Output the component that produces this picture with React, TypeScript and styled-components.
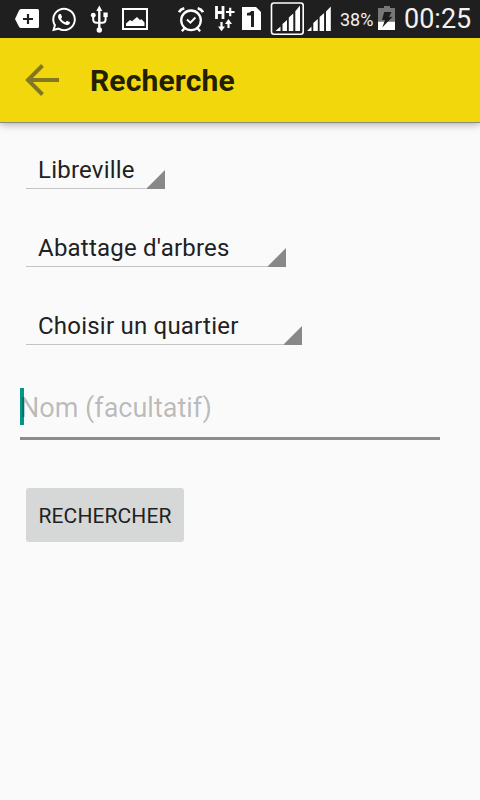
import React from "react";
import styled, { createGlobalStyle } from "styled-components";
import { FaWhatsapp } from "react-icons/fa";

const GlobalStyle = createGlobalStyle`
  *, *::before, *::after { box-sizing: border-box; }
  html, body { margin: 0; padding: 0; background: #fafafa; }
  body { font-family: Roboto, "Liberation Sans", sans-serif; color: #212121; }
`;

const Screen = styled.div`
  width: 480px;
  height: 800px;
  overflow: hidden;
  display: flex;
  flex-direction: column;
  background: #fafafa;
`;

const StatusBar = styled.header`
  height: 38px;
  flex: none;
  display: flex;
  align-items: center;
  padding-left: 15px;
  position: relative;
  z-index: 1;
  background: #1f1f1f;
  color: #fff;
`;

const StatusIcon = styled.svg<{ $gap?: number }>`
  display: block;
  flex: none;
  margin-left: ${(p) => p.$gap ?? 0}px;
`;

const WhatsappSlot = styled.span`
  display: flex;
  flex: none;
  justify-content: center;
  width: 24px;
  margin: 1px 0 0 12px;
`;

const StatusText = styled.span<{ $size: number; $width: number; $gap: number; $drop?: number }>`
  flex: none;
  width: ${(p) => p.$width}px;
  margin-left: ${(p) => p.$gap}px;
  padding-top: ${(p) => p.$drop ?? 0}px;
  font-size: ${(p) => p.$size}px;
  line-height: 36px;
  white-space: nowrap;
  color: #f2f2f2;
`;

const AppBar = styled.div`
  height: 85px;
  flex: none;
  display: flex;
  align-items: center;
  padding-left: 25px;
  background: #f2d70c;
  border-bottom: 1px solid #8b8a78;
  box-shadow: 0 1px 8px rgba(0, 0, 0, 0.35);
`;

const BackButton = styled.button`
  display: flex;
  padding: 0;
  border: 0;
  background: none;
`;

const Title = styled.h1`
  margin: 1px 0 0 31px;
  font-size: 30px;
  line-height: 41px;
  font-weight: 700;
  letter-spacing: 0.15px;
  color: #221f02;
`;

const Form = styled.main`
  display: flex;
  flex-direction: column;
  align-items: flex-start;
  padding: 27px 0 0 26px;
`;

const Spinner = styled.div<{ $width: number }>`
  width: ${(p) => p.$width}px;
  height: 39px;
  margin-bottom: 39px;
  padding-left: 12px;
  display: flex;
  justify-content: space-between;
  align-items: flex-end;
  border-bottom: 1px solid #c4c4c4;
  font-size: 24px;
  line-height: 36px;
  letter-spacing: 0.22px;
  white-space: nowrap;
`;

const Corner = styled.svg`
  display: block;
  flex: none;
  margin-bottom: -1px;
`;

const NameField = styled.div`
  width: 420px;
  height: 54px;
  margin: 2px 0 0 -6px;
  display: flex;
  align-items: flex-start;
  border-bottom: 3px solid #8c8c8c;
`;

const Caret = styled.span`
  width: 4px;
  height: 37px;
  margin: 2px -4px 0 0;
  flex: none;
  background: #009788;
`;

const Placeholder = styled.span`
  position: relative;
  font-size: 27px;
  line-height: 44px;
  color: rgba(0, 0, 0, 0.27);
`;

const SearchButton = styled.button`
  width: 158px;
  height: 54px;
  margin-top: 48px;
  padding: 2px 0 0;
  border: 0;
  border-radius: 3px;
  background: #d6d8d7;
  color: #212121;
  font: 400 21px/52px Roboto, sans-serif;
  letter-spacing: 0.1px;
  white-space: nowrap;
`;

const TagIcon = () => (
  <StatusIcon width="25" height="38" viewBox="15 0 25 38">
    <path d="M21 9h16.500q1.500 0 1.500 1.500v16q0 1.500-1.500 1.500H21q-1.200 0-2-1.200L15 19l4-8.500Q19.800 9 21 9Z" fill="#fff" />
    <path d="M28 14v10M23 19h10" stroke="#1f1f1f" strokeWidth="2.200" />
  </StatusIcon>
);

const UsbIcon = () => (
  <StatusIcon $gap={14} width="18" height="38" viewBox="90 0 18 38" fill="none" stroke="#fff">
    <path d="M99.300 10v20" strokeWidth="2.400" />
    <path d="M93.200 16v3.500q0 3.200 3.500 3.200h5.600q3.300 0 3.300-3.200V16" strokeWidth="2" />
    <path d="m99.300 5.500 3 5.500h-6Z" fill="#fff" stroke="none" />
    <circle cx="93.300" cy="15.200" r="2.400" fill="#fff" stroke="none" />
    <path d="M103.400 12.500h4.300v4.600h-4.300Z" fill="#fff" stroke="none" />
    <circle cx="99.300" cy="30" r="2.700" fill="#fff" stroke="none" />
  </StatusIcon>
);

const PictureIcon = () => (
  <StatusIcon $gap={14} width="26" height="38" viewBox="122 0 26 38">
    <path d="M123 9h24v20h-24Z" fill="none" stroke="#fff" strokeWidth="2" />
    <path d="M126 26v-2.500l4-3.500 2 1.200 5-4.200 3 3 1.500-.8 3 3.300V26Z" fill="#fff" />
  </StatusIcon>
);

const AlarmIcon = () => (
  <StatusIcon $gap={30} width="26" height="38" viewBox="178 0 26 38" fill="none" stroke="#fff">
    <circle cx="191" cy="20.300" r="9.800" strokeWidth="2.300" />
    <path d="m187 19.500 3.400 3.200 5-5.200" strokeWidth="2" />
    <path d="M179 12.200q1.500-3 5.300-3.900M203 12.200q-1.500-3-5.300-3.900" strokeWidth="2.700" />
    <path d="m184.500 28.300-2.600 3M197.500 28.300l2.600 3" strokeWidth="2.400" />
  </StatusIcon>
);

const HspaIcon = () => (
  <StatusIcon $gap={11} width="20" height="38" viewBox="215 0 20 38" fill="none" stroke="#fff">
    <path d="M216.500 6v13M223 6v13M216.500 12.500h6.500" strokeWidth="2.800" />
    <path d="M226 12h8.500M230.200 7.800v8.400" strokeWidth="2.200" />
    <path d="M221.500 22v6M228.500 28v-6" strokeWidth="2.200" />
    <path d="M218 26.500h7l-3.500 4.700ZM225 24h7l-3.500-4.900Z" fill="#fff" stroke="none" />
  </StatusIcon>
);

const SimIcon = () => (
  <StatusIcon $gap={7} width="19" height="38" viewBox="242 0 19 38">
    <path d="M242 7h14l5 5v18h-19Z" fill="#fff" />
    <path d="M254 11v16h-3V15.500h-4V13q3.200 0 4.300-2Z" fill="#1f1f1f" />
  </StatusIcon>
);

const SignalBoxedIcon = () => (
  <StatusIcon $gap={9} width="34" height="38" viewBox="270 0 34 38">
    <rect x="271.500" y="3" width="31.700" height="31.200" rx="2.500" fill="none" stroke="#fff" strokeWidth="1.600" />
    <path d="M275.500 31l5-4.500V31ZM282.500 31v-7l4.500-4v11ZM288.800 31V17.500l4.500-4V31ZM295.300 31V11.200l4.700-5.700V31Z" fill="#fff" />
  </StatusIcon>
);

const SignalIcon = () => (
  <StatusIcon $gap={3} width="24" height="38" viewBox="307 0 24 38">
    <path d="M307 31l4.500-4.500V31ZM313.300 31v-8l4.500-4v12ZM319.600 31V17l4.500-4v18ZM326 31V11.500l4.800-5V31Z" fill="#fff" />
  </StatusIcon>
);

const BatteryIcon = () => (
  <StatusIcon $gap={4} width="17" height="38" viewBox="378 0 17 38">
    <path d="M384 6h6v2h5v22h-17V8h6Z" fill="#777" />
    <path d="M378 21.800h17V30h-17Z" fill="#fff" />
    <path d="M384.200 12h7.300l-2.500 5 3.500-.2L382.300 27.500l2.700-7.500h-3Z" fill="#1c1c1c" />
  </StatusIcon>
);

const SpinnerField = ({ label, width }: { label: string; width: number }) => (
  <Spinner $width={width}>
    {label}
    <Corner width="18" height="19" viewBox="0 0 18 19">
      <path d="M18 0v19H0v-1Z" fill="#888" />
    </Corner>
  </Spinner>
);

export default function App() {
  return (
    <>
      <GlobalStyle />
      <Screen>
        <StatusBar>
          <TagIcon />
          <WhatsappSlot><FaWhatsapp size={27} /></WhatsappSlot>
          <UsbIcon />
          <PictureIcon />
          <AlarmIcon />
          <HspaIcon />
          <SimIcon />
          <SignalBoxedIcon />
          <SignalIcon />
          <StatusText $size={18} $width={34} $gap={9} $drop={2}>38%</StatusText>
          <BatteryIcon />
          <StatusText $size={27} $width={70} $gap={9}>00:25</StatusText>
        </StatusBar>
        <AppBar>
          <BackButton aria-label="Retour">
            <svg width="34" height="34" viewBox="0 0 34 34" fill="none" stroke="#827823" strokeWidth="4">
              <path d="M34 17H3M17.500 2.500 3 17l14.500 14.500" />
            </svg>
          </BackButton>
          <Title>Recherche</Title>
        </AppBar>
        <Form>
          <SpinnerField label="Libreville" width={139} />
          <SpinnerField label="Abattage d'arbres" width={260} />
          <SpinnerField label="Choisir un quartier" width={276} />
          <NameField>
            <Caret />
            <Placeholder>Nom (facultatif)</Placeholder>
          </NameField>
          <SearchButton>RECHERCHER</SearchButton>
        </Form>
      </Screen>
    </>
  );
}
